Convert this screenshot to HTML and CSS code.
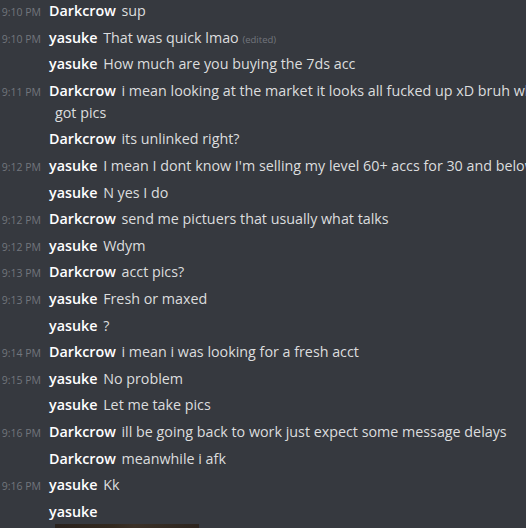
FILE: index.html
```html
<!DOCTYPE html>
<html>
<head>
<meta charset="utf-8">
<link rel="stylesheet" href="styles.css">
</head>
<body>
<div class="chat">
  <div class="msg"><span class="time">9:10 PM</span><span class="name">Darkcrow</span> <span class="text">sup</span></div>
  <div class="msg"><span class="time">9:10 PM</span><span class="name">yasuke</span> <span class="text">That was quick lmao</span> <span class="edited">(edited)</span></div>
  <div class="msg"><span class="time hidden"></span><span class="name">yasuke</span> <span class="text">How much are you buying the 7ds acc</span></div>
  <div class="msg"><span class="time">9:11 PM</span><span class="name">Darkcrow</span> <span class="text">i mean looking at the market it looks all fucked up xD bruh who<br>got pics</span></div>
  <div class="msg"><span class="time hidden"></span><span class="name">Darkcrow</span> <span class="text">its unlinked right?</span></div>
  <div class="msg"><span class="time">9:12 PM</span><span class="name">yasuke</span> <span class="text">I mean I dont know I'm selling my level 60+ accs for 30 and below</span></div>
  <div class="msg"><span class="time hidden"></span><span class="name">yasuke</span> <span class="text">N yes I do</span></div>
  <div class="msg"><span class="time">9:12 PM</span><span class="name">Darkcrow</span> <span class="text">send me pictuers that usually what talks</span></div>
  <div class="msg"><span class="time">9:12 PM</span><span class="name">yasuke</span> <span class="text">Wdym</span></div>
  <div class="msg"><span class="time">9:13 PM</span><span class="name">Darkcrow</span> <span class="text">acct pics?</span></div>
  <div class="msg"><span class="time">9:13 PM</span><span class="name">yasuke</span> <span class="text">Fresh or maxed</span></div>
  <div class="msg"><span class="time hidden"></span><span class="name">yasuke</span> <span class="text">?</span></div>
  <div class="msg"><span class="time">9:14 PM</span><span class="name">Darkcrow</span> <span class="text">i mean i was looking for a fresh acct</span></div>
  <div class="msg"><span class="time">9:15 PM</span><span class="name">yasuke</span> <span class="text">No problem</span></div>
  <div class="msg"><span class="time hidden"></span><span class="name">yasuke</span> <span class="text">Let me take pics</span></div>
  <div class="msg"><span class="time">9:16 PM</span><span class="name">Darkcrow</span> <span class="text">ill be going back to work just expect some message delays</span></div>
  <div class="msg"><span class="time hidden"></span><span class="name">Darkcrow</span> <span class="text">meanwhile i afk</span></div>
  <div class="msg"><span class="time">9:16 PM</span><span class="name">yasuke</span> <span class="text">Kk</span></div>
  <div class="msg last"><span class="time hidden"></span><span class="name">yasuke</span>
    <div class="attachment"></div>
  </div>
</div>
</body>
</html>
```
FILE: styles.css
```css
html, body {
  margin: 0;
  padding: 0;
  background: #36393f;
  overflow: hidden;
  height: 100%;
}
.chat {
  width: 760px;
  font-family: "Open Sans", "Noto Sans", sans-serif;
  font-size: 14.3px;
  color: #dcddde;
}
.msg {
  white-space: nowrap;
  line-height: 22px;
  padding-left: 55px;
  text-indent: -55px;
  padding-bottom: 4.6px;
}
.time {
  display: inline-block;
  text-indent: 0;
  width: 41px;
  margin-right: 8px;
  text-align: right;
  font-size: 10.5px;
  line-height: 10px;
  color: #72767d;
  vertical-align: baseline;
}
.name {
  font-weight: 600;
  color: #ffffff;
  margin-right: 2px;
}
.edited {
  font-size: 9.5px;
  line-height: 10px;
  color: #72767d;
}
.last {
  padding-bottom: 0;
}
.attachment {
  text-indent: 0;
  margin-top: 1px;
  width: 144px;
  height: 60px;
  background: linear-gradient(90deg, #2a221d 0%, #33291f 40%, #3b3128 55%, #2c241e 100%);
}
```
